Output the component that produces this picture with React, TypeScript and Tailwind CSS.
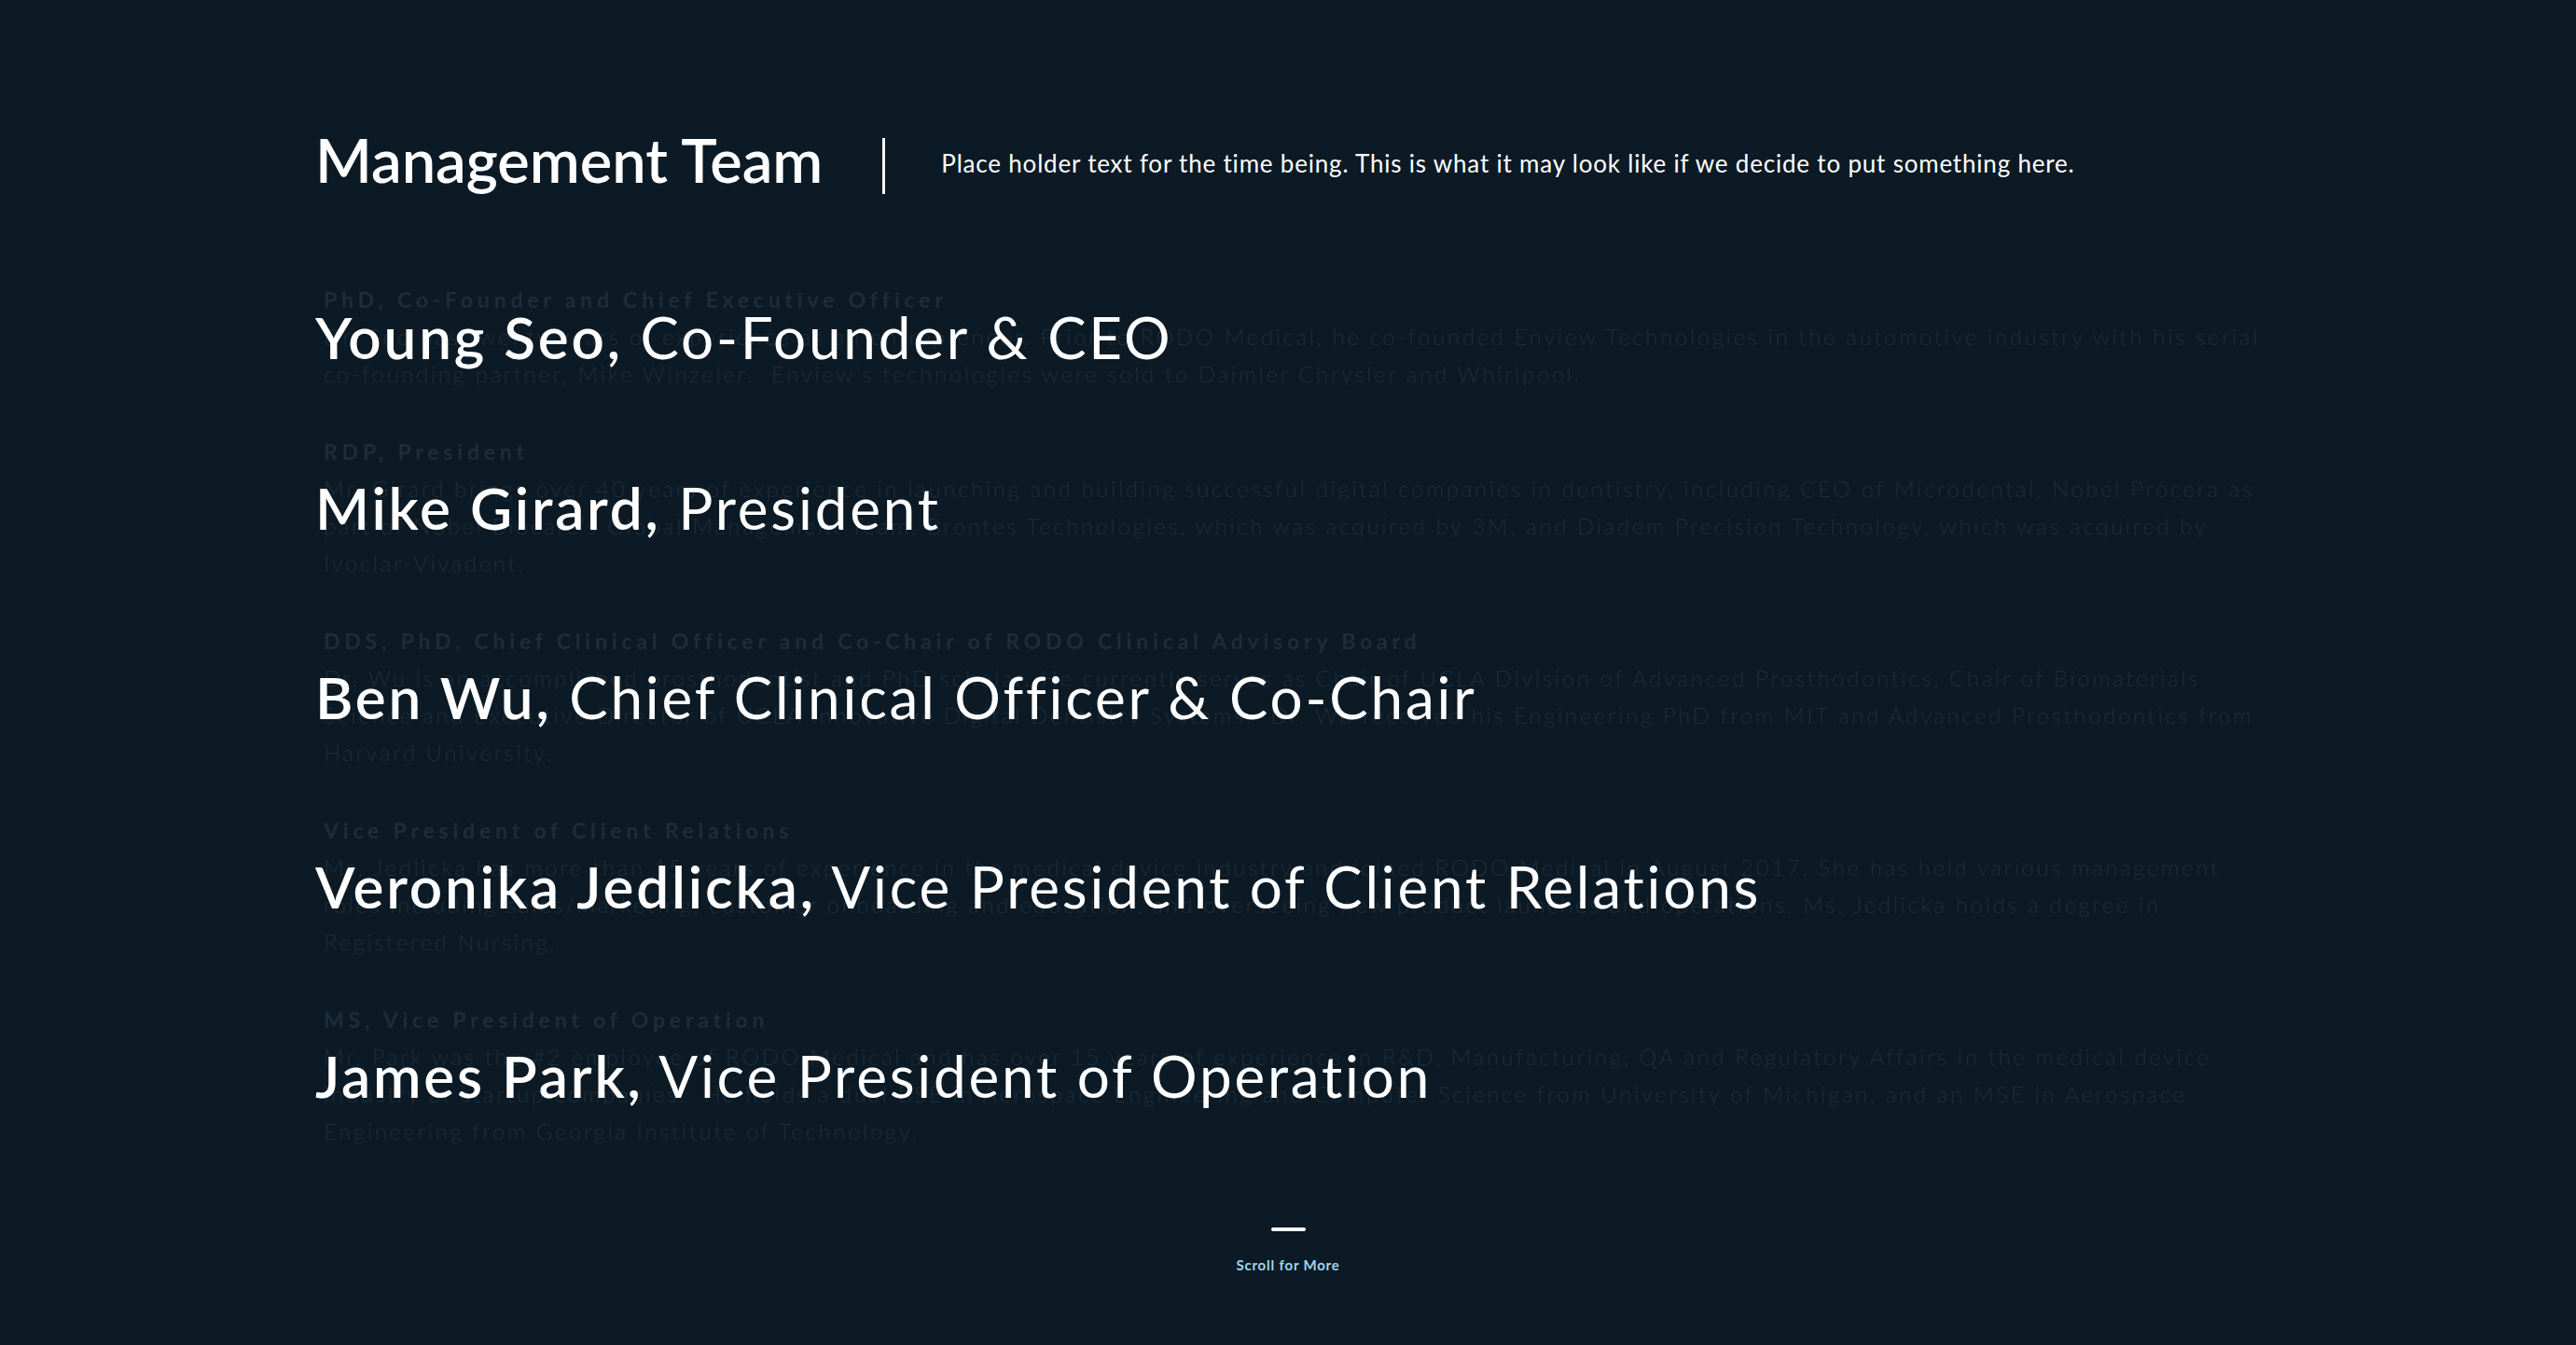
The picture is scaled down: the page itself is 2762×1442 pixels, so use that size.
const TEAM = [
  {
    name: "Young Seo,",
    role: "Co-Founder & CEO",
    title: "PhD, Co-Founder and Chief Executive Officer",
    bio: [
      "Dr. Seo has twenty years of experience as an entrepreneur. Prior to RODO Medical, he co-founded Enview Technologies in the automotive industry with his serial",
      "co-founding partner, Mike Winzeler.  Enview’s technologies were sold to Daimler Chrysler and Whirlpool.",
    ],
  },
  {
    name: "Mike Girard,",
    role: "President",
    title: "RDP, President",
    bio: [
      "Mr. Girard brings over 40 years of experience in launching and building successful digital companies in dentistry, including CEO of Microdental, Nobel Procera as",
      "part of Nobel Biocare’s Global Management Team, Brontes Technologies, which was acquired by 3M, and Diadem Precision Technology, which was acquired by",
      "Ivoclar-Vivadent.",
    ],
  },
  {
    name: "Ben Wu,",
    role: "Chief Clinical Officer & Co-Chair",
    title: "DDS, PhD, Chief Clinical Officer and Co-Chair of RODO Clinical Advisory Board",
    bio: [
      "Dr. Wu is an accomplished prosthodontist and PhD scholar. He currently serves as Chair of UCLA Division of Advanced Prosthodontics, Chair of Biomaterials",
      "Science and Executive Director of UCLA Innovative Digital Dentistry Systems.  Dr. Wu received his Engineering PhD from MIT and Advanced Prosthodontics from",
      "Harvard University.",
    ],
  },
  {
    name: "Veronika Jedlicka,",
    role: "Vice President of Client Relations",
    title: "Vice President of Client Relations",
    bio: [
      "Ms. Jedlicka has more than 15 years of experience in the medical device industry and joined RODO Medical in August 2017. She has held various management",
      "roles including sales/marketing, customer onboarding and education, and overseeing new product launches and operations. Ms. Jedlicka holds a degree in",
      "Registered Nursing.",
    ],
  },
  {
    name: "James Park,",
    role: "Vice President of Operation",
    title: "MS, Vice President of Operation",
    bio: [
      "Mr. Park was the #2 employee of RODO Medical and has over 15 years of experience in R&D, Manufacturing, QA and Regulatory Affairs in the medical device",
      "industry at startup companies.  He holds a dual BSE in Aerospace Engineering and Computer Science from University of Michigan, and an MSE in Aerospace",
      "Engineering from Georgia Institute of Technology.",
    ],
  },
];

function Member({ name, role, title, bio }: (typeof TEAM)[number]) {
  return (
    <div className="relative">
      <div className="pl-[9px] text-[#1e2d39]">
        <h3 className="text-[23px] font-bold leading-[40px] tracking-[4.8px] whitespace-nowrap">
          {title}
        </h3>
        {bio.map((line) => (
          <p
            key={line}
            className="text-[24px] font-light leading-[40px] tracking-[2.6px] whitespace-pre"
          >
            {line}
          </p>
        ))}
      </div>

      {/* name sits over the faded bio */}
      <div className="absolute inset-0 flex items-center">
        <h2 className="text-[62px] leading-none tracking-[2.8px] text-white whitespace-nowrap">
          <span className="font-semibold">{name}</span> {role}
        </h2>
      </div>
    </div>
  );
}

function App() {
  return (
    <div className="min-h-screen bg-[#0c1a25] font-['Lato',sans-serif]">
      <div className="mx-auto w-[2086px] pt-[139px]">
        <div className="flex items-start">
          <h1 className="text-[65px] font-semibold leading-none text-white whitespace-nowrap">
            Management Team
          </h1>
          <div className="ml-[64px] mt-[9px] h-[60px] w-[3px] bg-white" />
          <p className="ml-[60px] mt-[23px] text-[26px] leading-none tracking-[0.8px] text-white whitespace-nowrap">
            Place holder text for the time being. This is what it may look like
            if we decide to put something here.
          </p>
        </div>

        <div className="mt-[93px] flex flex-col gap-[43px]">
          {TEAM.map((member) => (
            <Member key={member.title} {...member} />
          ))}
        </div>

        <div className="mt-[83px] flex flex-col items-center">
          <div className="h-[4px] w-[37px] rounded-full bg-white" />
          <span className="mt-[29px] text-[15px] font-bold leading-none tracking-[0.8px] text-[#9fd4ea]">
            Scroll for More
          </span>
        </div>
      </div>
    </div>
  );
}

export default App;
